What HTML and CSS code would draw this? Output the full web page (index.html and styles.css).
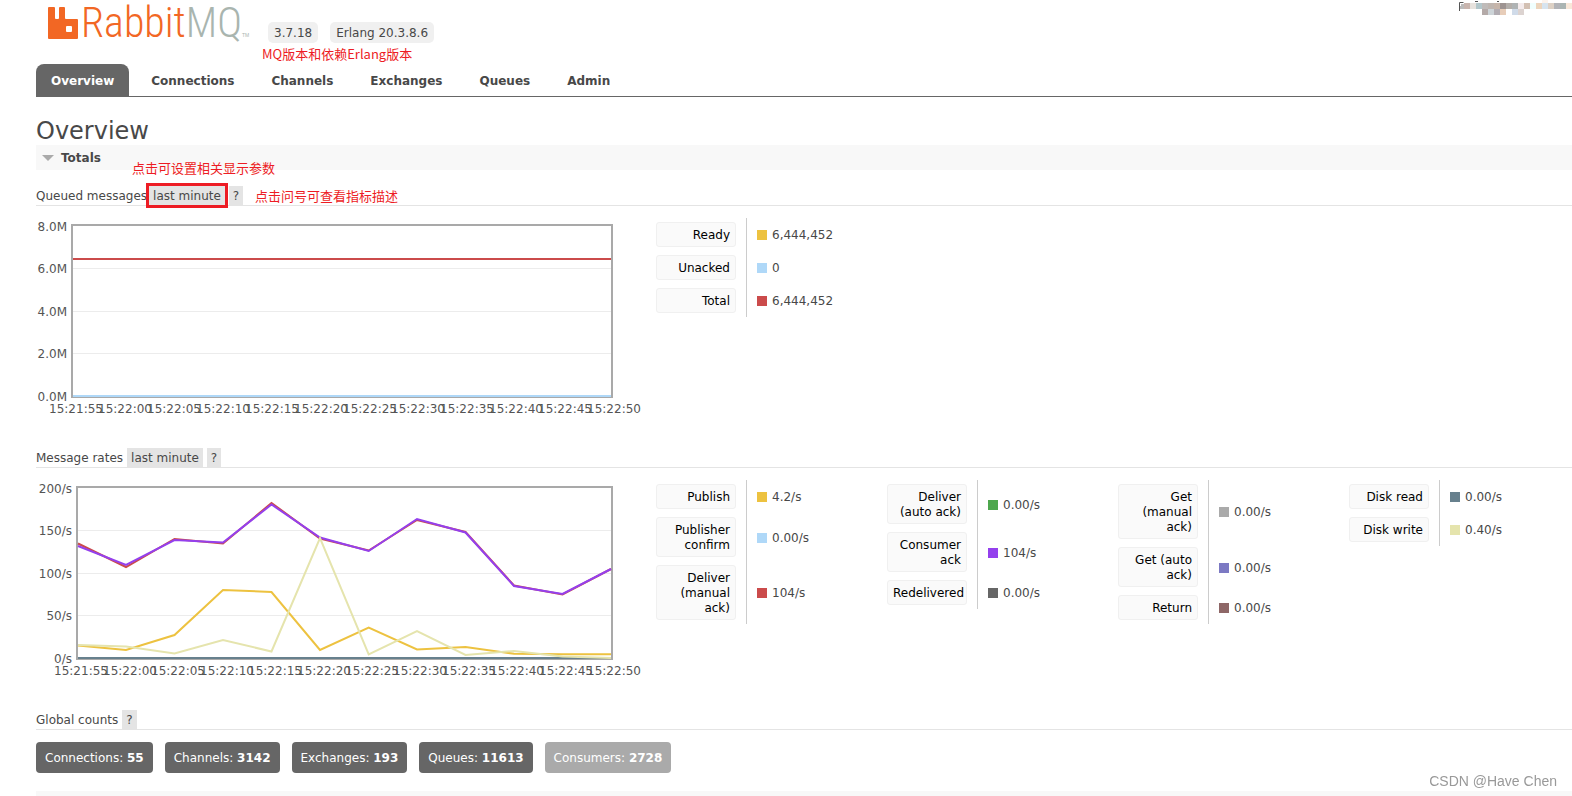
FILE: index.html
```html
<!DOCTYPE html>
<html lang="en">
<head>
<meta charset="utf-8">
<title>RabbitMQ Management</title>
<link rel="stylesheet" href="styles.css">
</head>
<body>
<header class="top">
  <a class="logo" href="#" aria-label="RabbitMQ">
    <svg class="logo-mark" viewBox="0 0 30 32" width="30" height="32" aria-hidden="true"><path fill="#f26724" fill-rule="evenodd" d="M1 0h5q1 0 1 1v10q0 1 1 1h2q1 0 1-1V1q0-1 1-1h4q1 0 1 1v10q0 1 1 1h11q1 0 1 1v18q0 1-1 1H1q-1 0-1-1V1q0-1 1-1zM19 19q-1 0-1 1v4q0 1 1 1h4q1 0 1-1v-4q0-1-1-1z"/></svg>
    <span class="logo-name">Rabbit<span class="logo-mq">MQ</span></span><span class="logo-tm">TM</span>
  </a>
  <ul class="versions">
    <li>3.7.18</li>
    <li>Erlang 20.3.8.6</li>
  </ul>
  <span class="note note-version">MQ版本和依赖Erlang版本</span>
  <svg class="mosaic" viewBox="0 0 114 16" width="114" height="16" aria-hidden="true">
    <path d="M1.500 11V2.500h4" fill="none" stroke="#555"/>
    <path d="M17 1.500h3M39 1.500h2" stroke="#555"/>
    <g shape-rendering="crispEdges">
    <path fill="#bbb" d="M3 4h3v5H2z"/>
    <path fill="#c9b5ae" d="M6 3h6v6H6z"/><path fill="#e8e3de" d="M12 3h6v6h-6z"/><path fill="#b3c7cb" d="M18 3h6v6h-6z"/><path fill="#bfbbb9" d="M24 3h6v6h-6z"/><path fill="#bfb6b0" d="M30 3h6v6h-6z"/><path fill="#c6b5aa" d="M36 3h6v6h-6z"/><path fill="#9d9391" d="M42 3h6v6h-6z"/><path fill="#b3aeaa" d="M48 3h6v6h-6z"/><path fill="#afb3b4" d="M54 3h6v6h-6z"/><path fill="#f4ebec" d="M60 3h6v6h-6z"/><path fill="#d3c0b3" d="M66 3h6v6h-6z"/><path fill="#f0fffe" d="M72 3h6v6h-6z"/><path fill="#ecd5bd" d="M78 3h6v6h-6z"/><path fill="#d7e4ef" d="M84 3h6v6h-6z"/><path fill="#ddd1c5" d="M90 3h6v6h-6z"/><path fill="#b3b4b8" d="M96 3h6v6h-6z"/><path fill="#aab5b3" d="M102 3h6v6h-6z"/><path fill="#f8e8d9" d="M108 3h6v6h-6z"/>
    <path fill="#b4aaa8" d="M24 9h6v6h-6z"/><path fill="#cdd4d8" d="M30 9h6v6h-6z"/><path fill="#b2adb3" d="M36 9h6v6h-6z"/><path fill="#e7cdb9" d="M42 9h6v6h-6z"/><path fill="#d0dbe9" d="M54 9h6v6h-6z"/><path fill="#dcd3d0" d="M60 9h6v6h-6z"/><path fill="#fcf3ec" d="M84 0h6v3h-6z"/>
    </g>
  </svg>
</header>

<nav class="tabs">
  <a class="tab tab-on" href="#">Overview</a>
  <a class="tab" href="#">Connections</a>
  <a class="tab" href="#">Channels</a>
  <a class="tab" href="#">Exchanges</a>
  <a class="tab" href="#">Queues</a>
  <a class="tab" href="#">Admin</a>
</nav>

<main class="main">
  <h1 class="title">Overview</h1>
  <h2 class="bar"><svg class="arrow" viewBox="0 0 12 6" width="12" height="6" aria-hidden="true"><path fill="#aaa" d="M0 0h12L6 6z"/></svg>Totals<span class="note note-params">点击可设置相关显示参数</span></h2>

  <section class="block">
    <h3 class="head">Queued messages
      <span class="marked"><button class="chip">last minute</button></span>
      <button class="chip chip-help">?</button>
      <span class="note note-help">点击问号可查看指标描述</span>
    </h3>
    <div class="row">
      <svg class="chart" viewBox="0 0 610 200" width="610" height="200" role="img" aria-label="Queued messages">
        <path class="grid" d="M37 50.500h538M37 93.500h538M37 135.500h538"/>
        <rect class="frame" x="36" y="7" width="540" height="172"/>
        <path class="line" stroke="#cb4b4b" d="M37 41h538"/>
        <path class="line" stroke="#afd8f8" d="M37 178h538"/>
        <g class="ticks-y"><text x="31" y="13">8.0M</text><text x="31" y="55">6.0M</text><text x="31" y="98">4.0M</text><text x="31" y="140">2.0M</text><text x="31" y="183">0.0M</text></g>
        <g class="ticks-x"><text x="40" y="195">15:21:55</text><text x="89" y="195">15:22:00</text><text x="138" y="195">15:22:05</text><text x="187" y="195">15:22:10</text><text x="236" y="195">15:22:15</text><text x="285" y="195">15:22:20</text><text x="334" y="195">15:22:25</text><text x="382" y="195">15:22:30</text><text x="431" y="195">15:22:35</text><text x="480" y="195">15:22:40</text><text x="529" y="195">15:22:45</text><text x="578" y="195">15:22:50</text></g>
      </svg>
      <div class="legends">
        <table class="legend">
          <tr><th><button class="key">Ready</button></th><td><i class="swatch c-yellow"></i>6,444,452</td></tr>
          <tr><th><button class="key">Unacked</button></th><td><i class="swatch c-sky"></i>0</td></tr>
          <tr><th><button class="key">Total</button></th><td><i class="swatch c-red"></i>6,444,452</td></tr>
        </table>
      </div>
    </div>
  </section>

  <section class="block">
    <h3 class="head">Message rates
      <button class="chip">last minute</button>
      <button class="chip chip-help">?</button>
    </h3>
    <div class="row">
      <svg class="chart" viewBox="0 0 610 200" width="610" height="200" role="img" aria-label="Message rates">
        <path class="grid" d="M42 50.500h533M42 93.500h533M42 135.500h533"/>
        <rect class="frame" x="41" y="7" width="535" height="172"/>
        <polyline class="line" stroke="#edc240" points="42,165.500 90,170 138.500,155 187,110 235.500,112 284,170 332.700,147.500 381,169.500 429.500,167 478,173.700 526.500,174.300 575,174.300"/>
        <polyline class="line" stroke="#cb4b4b" points="42,63.500 90,87 138.500,59 187,63.500 235.500,23 284,58.500 332.700,70.500 381,40 429.500,52 478,105.500 526.500,114.500 575,89"/>
        <polyline class="line" stroke="#9440ed" points="42,66 90,85 138.500,60 187,62.500 235.500,24.500 284,57.500 332.700,71 381,39 429.500,52.500 478,106 526.500,114 575,89"/>
        <path class="line" stroke="#67808d" d="M42 178h533"/>
        <polyline class="line" stroke="#e5e4ad" points="42,165 90,166.500 138.500,173.500 187,160 235.500,171.500 284,58 332.700,174.500 381,151 429.500,175 478,171 526.500,176.500 575,178"/>
        <g class="ticks-y"><text x="36" y="13">200/s</text><text x="36" y="55">150/s</text><text x="36" y="98">100/s</text><text x="36" y="140">50/s</text><text x="36" y="183">0/s</text></g>
        <g class="ticks-x"><text x="45" y="195">15:21:55</text><text x="94" y="195">15:22:00</text><text x="142" y="195">15:22:05</text><text x="191" y="195">15:22:10</text><text x="239" y="195">15:22:15</text><text x="288" y="195">15:22:20</text><text x="336" y="195">15:22:25</text><text x="384" y="195">15:22:30</text><text x="433" y="195">15:22:35</text><text x="481" y="195">15:22:40</text><text x="530" y="195">15:22:45</text><text x="578" y="195">15:22:50</text></g>
      </svg>
      <div class="legends">
        <table class="legend">
          <tr><th><button class="key">Publish</button></th><td><i class="swatch c-yellow"></i>4.2/s</td></tr>
          <tr><th><button class="key">Publisher confirm</button></th><td><i class="swatch c-sky"></i>0.00/s</td></tr>
          <tr><th><button class="key">Deliver (manual ack)</button></th><td><i class="swatch c-red"></i>104/s</td></tr>
        </table>
        <table class="legend">
          <tr><th><button class="key">Deliver (auto ack)</button></th><td><i class="swatch c-green"></i>0.00/s</td></tr>
          <tr><th><button class="key">Consumer ack</button></th><td><i class="swatch c-purple"></i>104/s</td></tr>
          <tr><th><button class="key">Redelivered</button></th><td><i class="swatch c-dark"></i>0.00/s</td></tr>
        </table>
        <table class="legend">
          <tr><th><button class="key">Get (manual ack)</button></th><td><i class="swatch c-gray"></i>0.00/s</td></tr>
          <tr><th><button class="key">Get (auto ack)</button></th><td><i class="swatch c-violet"></i>0.00/s</td></tr>
          <tr><th><button class="key">Return</button></th><td><i class="swatch c-brown"></i>0.00/s</td></tr>
        </table>
        <table class="legend">
          <tr><th><button class="key">Disk read</button></th><td><i class="swatch c-slate"></i>0.00/s</td></tr>
          <tr><th><button class="key">Disk write</button></th><td><i class="swatch c-cream"></i>0.40/s</td></tr>
        </table>
      </div>
    </div>
  </section>

  <section class="block">
    <h3 class="head">Global counts
      <button class="chip chip-help">?</button>
    </h3>
    <div class="counts">
      <a class="count" href="#">Connections: <b>55</b></a>
      <a class="count" href="#">Channels: <b>3142</b></a>
      <a class="count" href="#">Exchanges: <b>193</b></a>
      <a class="count" href="#">Queues: <b>11613</b></a>
      <span class="count count-off">Consumers: <b>2728</b></span>
    </div>
  </section>
  <div class="next-bar"></div>
</main>
<span class="watermark">CSDN @Have Chen</span>
</body>
</html>
```
FILE: styles.css
```css
* { box-sizing: border-box; }
html { overflow-x: hidden; }
body {
  margin: 0;
  background: #fff;
  color: #484848;
  font: 12px/15px Verdana, "DejaVu Sans", "Noto Sans CJK SC", sans-serif;
}
button { font: inherit; color: inherit; border: 0; margin: 0; }
h1, h2, h3, ul { margin: 0; padding: 0; font-weight: normal; }
a { color: inherit; text-decoration: none; }

.top { position: relative; display: flex; height: 64px; padding-left: 48px; }
.logo { display: flex; width: 220px; padding-top: 7px; }
.logo-mark { margin-right: 3px; }
.logo-name {
  font: 300 42px/32px "Roboto Condensed", "Open Sans Condensed", Lato, sans-serif;
  color: #f26724;
}
.logo-mq { color: #a9b5af; }
.logo-tm { align-self: flex-start; padding-top: 24px; font: 5px/8px "Liberation Sans", sans-serif; color: #a9b5af; }
.versions { display: flex; gap: 12px; padding-top: 22px; list-style: none; }
.versions li { height: 21px; padding: 4px 6px 2px; border-radius: 5px; background: #f0f0f0; }
.mosaic { position: absolute; right: 0; top: 0; }

.note {
  position: absolute;
  color: #ed1c24;
  font: 13px/18px "Noto Sans CJK SC", sans-serif;
  white-space: nowrap;
}
.note-version { left: 262px; top: 45px; }
.note-params { left: 96px; top: 14px; }
.note-help { left: 219px; top: 1px; }

.tabs { display: flex; gap: 7px; margin-left: 36px; border-bottom: 1px solid #666; }
.tab { padding: 10px 15px 7px; border-radius: 8px 8px 0 0; font-weight: bold; }
.tab-on { background: #666; color: #fff; }

.main { padding: 20px 0 0 36px; }
.title { font-size: 24px; line-height: 28px; }
.bar {
  position: relative;
  display: flex;
  align-items: center;
  height: 25px;
  margin-bottom: 16px;
  padding: 1px 0 0 6px;
  background: #f8f8f8;
  font-size: 12px;
  font-weight: bold;
}
.arrow { margin-right: 7px; }

.head {
  position: relative;
  display: flex;
  align-items: flex-start;
  gap: 4px;
  height: 20px;
  border-bottom: 1px solid #e4e4e4;
  font-size: 12px;
  line-height: 21px;
}
.chip { height: 19px; padding: 3px 4px 1px; background: #e4e4e4; line-height: 15px; }
.marked { display: flex; margin-left: -2px; outline: 3px solid #ed1c24; }
.row { display: flex; align-items: flex-start; padding-top: 12px; margin-bottom: 30px; }

.chart { flex: none; overflow: visible; }
.grid { stroke: #ececec; }
.frame { fill: none; stroke: #a9a9a9; stroke-width: 2; }
.line { fill: none; stroke-width: 2; }
.ticks-y, .ticks-x { fill: #545454; font-size: 12px; }
.ticks-y { text-anchor: end; }
.ticks-x { text-anchor: middle; }

.legends { display: flex; flex: 1; align-items: flex-start; min-width: 0; }
.legend { width: 231px; padding-left: 10px; border-collapse: separate; border-spacing: 0; }
.legend th { width: 90px; padding: 4px 10px 4px 0; font-weight: normal; }
.legend td { padding: 6px 10px 4px; border-left: 1px solid #ccc; }
.key {
  display: block;
  width: 80px;
  padding: 5px 5px 3px;
  border: 1px solid #f0f0f0;
  border-radius: 3px;
  background: #fafafa;
  color: #000;
  text-align: right;
}
.swatch { display: inline-block; width: 10px; height: 10px; margin-right: 5px; vertical-align: -1px; }
.c-yellow { background: #edc240; }
.c-sky { background: #afd8f8; }
.c-red { background: #cb4b4b; }
.c-green { background: #4da74d; }
.c-purple { background: #9440ed; }
.c-dark { background: #666; }
.c-gray { background: #aaa; }
.c-violet { background: #7c79c3; }
.c-brown { background: #8e6767; }
.c-slate { background: #67808d; }
.c-cream { background: #e5e4ad; }

.counts { display: flex; gap: 12px; padding-top: 12px; }
.count { padding: 9px 9px 7px; border-radius: 4px; background: #666; color: #fff; }
.count-off { background: #aaa; }
.next-bar { height: 5px; margin-top: 18px; background: #f8f8f8; }
.watermark {
  position: fixed;
  right: 15px;
  bottom: 6px;
  color: #999;
  font: 14px/18px "Liberation Sans", Arial, sans-serif;
}
```
